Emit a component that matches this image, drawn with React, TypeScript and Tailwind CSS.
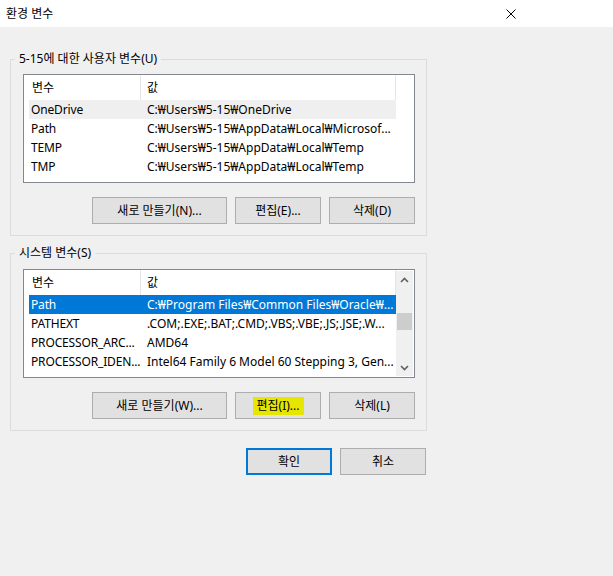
import React from 'react';

type Row = { name: string; value: string };

const userVars: Row[] = [
  { name: 'OneDrive', value: 'C:₩Users₩5-15₩OneDrive' },
  { name: 'Path', value: 'C:₩Users₩5-15₩AppData₩Local₩Microsof...' },
  { name: 'TEMP', value: 'C:₩Users₩5-15₩AppData₩Local₩Temp' },
  { name: 'TMP', value: 'C:₩Users₩5-15₩AppData₩Local₩Temp' },
];

const sysVars: Row[] = [
  { name: 'Path', value: 'C:₩Program Files₩Common Files₩Oracle₩...' },
  { name: 'PATHEXT', value: '.COM;.EXE;.BAT;.CMD;.VBS;.VBE;.JS;.JSE;.W...' },
  { name: 'PROCESSOR_ARC...', value: 'AMD64' },
  { name: 'PROCESSOR_IDEN...', value: 'Intel64 Family 6 Model 60 Stepping 3, Gen...' },
];

// 목록 (ListView 흉내)
const VarList: React.FC<{ rows: Row[]; selected: number; selectedColor: 'gray' | 'blue'; scroll?: boolean }> = ({
  rows,
  selected,
  selectedColor,
  scroll,
}) => (
  <div className="w-[392px] h-[109px] border border-[#828790] bg-white flex">
    <div className="w-[372px] pl-[5px]">
      {/* 헤더 */}
      <div className="h-[25px] flex items-center">
        <div className="w-[111px] pl-[3px]">변수</div>
        <div className="w-px h-full bg-[#e5e5e5]" />
        <div className="w-[254px] pl-[6px]">값</div>
        <div className="w-px h-full bg-[#e5e5e5]" />
      </div>
      {rows.map((r, i) => {
        const sel = i === selected;
        const bg = sel ? (selectedColor === 'blue' ? 'bg-[#0078d7] text-white' : 'bg-[#efefef]') : '';
        return (
          <div key={r.name} className={`h-[19px] w-[367px] flex items-center whitespace-nowrap ${bg}`}>
            <div className="w-[112px] pl-[2px] tracking-[-0.15px]">{r.name}</div>
            <div className="w-[255px] pl-[6px] overflow-hidden">{r.value}</div>
          </div>
        );
      })}
    </div>
    {scroll && (
      <div className="mt-px mb-px w-[17px] bg-[#f0f0f0] flex flex-col items-center">
        <div className="h-[17px] w-full flex items-center justify-center">
          <svg width="9" height="6" viewBox="0 0 9 6">
            <path d="M1 5 L4.5 1.5 L8 5" fill="none" stroke="#606060" strokeWidth="1.6" />
          </svg>
        </div>
        <div className="mt-[25px] h-[17px] w-[15px] bg-[#cdcdcd]" />
        <div className="flex-1" />
        <div className="h-[17px] w-full flex items-center justify-center">
          <svg width="9" height="6" viewBox="0 0 9 6">
            <path d="M1 1 L4.5 4.5 L8 1" fill="none" stroke="#606060" strokeWidth="1.6" />
          </svg>
        </div>
      </div>
    )}
  </div>
);

const Btn: React.FC<{ w: string; children: React.ReactNode; primary?: boolean }> = ({ w, children, primary }) => (
  <div
    className={`${w} h-[27px] flex items-center justify-center bg-[#e1e1e1] ${
      primary ? 'border-2 border-[#0078d7]' : 'border border-[#adadad]'
    }`}
  >
    {children}
  </div>
);

const Group: React.FC<{ title: string; h: string; pt: string; children: React.ReactNode }> = ({ title, h, pt, children }) => (
  <div className={`relative w-[417px] ${h} border border-[#dcdcdc] pl-[12px] ${pt}`}>
    <div className="absolute left-[4px] top-[-9px] px-[4px] bg-[#f0f0f0] leading-[16px]">{title}</div>
    {children}
  </div>
);

export default function App() {
  return (
    <div className="w-[613px] h-[576px] bg-[#f0f0f0] text-[12px] leading-[16px] text-black font-['Noto_Sans','Noto_Sans_CJK_KR',sans-serif]">
      {/* 제목 표시줄 */}
      <div className="h-[27px] bg-white flex items-center justify-between pl-[6px] pr-[97px]">
        <span>환경 변수</span>
        <svg width="10" height="10" viewBox="0 0 10 10">
          <path d="M0.5 0.5 L9.5 9.5 M9.5 0.5 L0.5 9.5" stroke="#000" strokeWidth="1" />
        </svg>
      </div>

      <div className="pl-[10px] pt-[32px]">
        <Group title="5-15에 대한 사용자 변수(U)" h="h-[177px]" pt="pt-[14px]">
          <VarList rows={userVars} selected={0} selectedColor="gray" />
          <div className="mt-[14px] flex w-[392px] justify-end gap-[8px]">
            <Btn w="w-[135px]">새로 만들기(N)...</Btn>
            <Btn w="w-[86px]">편집(E)...</Btn>
            <Btn w="w-[86px]">삭제(D)</Btn>
          </div>
        </Group>

        <div className="mt-[17px]">
          <Group title="시스템 변수(S)" h="h-[178px]" pt="pt-[15px]">
            <VarList rows={sysVars} selected={0} selectedColor="blue" scroll />
            <div className="mt-[14px] flex w-[392px] justify-end gap-[8px]">
              <Btn w="w-[135px]">새로 만들기(W)...</Btn>
              <Btn w="w-[86px]">
                <span className="bg-[#e6e600] px-[4px] py-px">편집(I)...</span>
              </Btn>
              <Btn w="w-[86px]">삭제(L)</Btn>
            </div>
          </Group>
        </div>

        <div className="mt-[17px] w-[417px] flex justify-end gap-[8px] pr-px">
          <Btn w="w-[86px]" primary>
            확인
          </Btn>
          <Btn w="w-[86px]">취소</Btn>
        </div>
      </div>
    </div>
  );
}
